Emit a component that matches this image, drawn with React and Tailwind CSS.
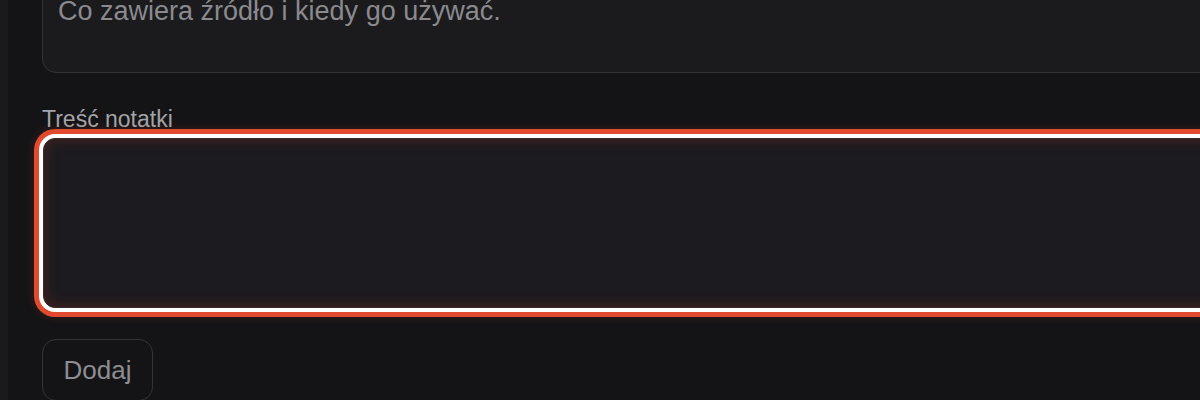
import React from 'react';

export default function App() {
    return (
        <div className="flex h-[400px] w-[1200px] overflow-hidden bg-[#141416] font-['Liberation_Sans',Arial,sans-serif]">
            <div className="w-[8px] shrink-0 bg-[#1a1a1d]" />

            <div className="flex min-w-0 flex-1 flex-col pl-[34px]">
                {/* description field (scrolled partly out of view) */}
                <div className="-mt-[20px] h-[93px] w-[1200px] shrink-0 rounded-[14px] border border-[#333336] bg-[#1b1b1e] px-[15px] pt-[15px]">
                    <div className="text-[27px] leading-[30px] text-[#8a8a8f]">Co zawiera źródło i kiedy go używać.</div>
                </div>

                <label className="mt-[33px] text-[23px] leading-[26px] text-[#a4a4a9]">Treść notatki</label>

                <div className="ml-[1px] mt-[6px] h-[170px] w-[1200px] shrink-0 rounded-[12px] border border-[#3a2a2a] bg-[#1c1b1f] shadow-[inset_0_0_14px_rgba(130,45,35,0.45),0_0_0_4px_#ffffff,0_0_0_9px_#e24a2f,0_0_10px_10px_rgba(226,74,47,0.15)]" />

                <button
                    type="button"
                    className="mt-[31px] flex h-[62px] w-[111px] shrink-0 items-center justify-center rounded-[14px] border border-[#343437] text-[26px] text-[#8d8d92]"
                >
                    Dodaj
                </button>
            </div>
        </div>
    );
}
